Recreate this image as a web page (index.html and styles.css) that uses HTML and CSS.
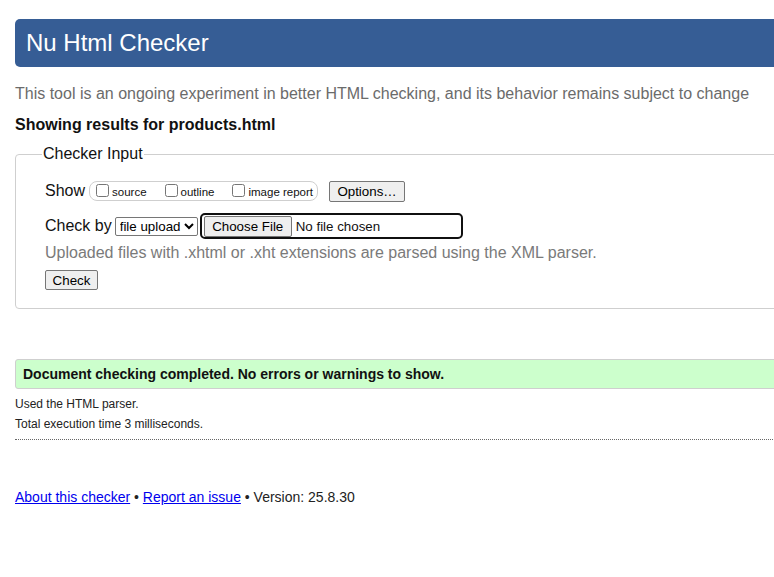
FILE: index.html
```html
<!DOCTYPE html>
<html lang="en">
<head>
<meta charset="utf-8">
<title>Nu Html Checker</title>
<link rel="stylesheet" href="styles.css">
</head>
<body>
<div class="page">
  <h1 class="title">Nu Html Checker</h1>
  <p class="tagline">This tool is an ongoing experiment in better HTML checking, and its behavior remains subject to change</p>
  <p class="showing">Showing results for products.html</p>
  <fieldset class="input-box">
    <legend class="legend">Checker Input</legend>
    <div class="row show-row">
      <span class="row-label">Show</span>
      <span class="show-group">
        <label class="opt"><input type="checkbox" class="cb">source</label>
        <label class="opt"><input type="checkbox" class="cb">outline</label>
        <label class="opt"><input type="checkbox" class="cb">image report</label>
      </span>
      <button type="button" class="btn options-btn">Options…</button>
    </div>
    <div class="row check-row">
      <span class="row-label">Check by</span>
      <select class="select"><option>file upload</option></select>
      <span class="file-box"><button type="button" class="btn file-btn">Choose File</button><span class="file-name">No file chosen</span></span>
    </div>
    <p class="hint">Uploaded files with .xhtml or .xht extensions are parsed using the XML parser.</p>
    <button type="button" class="btn check-btn">Check</button>
  </fieldset>
  <p class="success">Document checking completed. No errors or warnings to show.</p>
  <p class="small">Used the HTML parser.</p>
  <p class="small">Total execution time 3 milliseconds.</p>
  <hr class="dotted">
  <p class="footer"><a href="#">About this checker</a> • <a href="#">Report an issue</a> • Version: 25.8.30</p>
</div>
</body>
</html>
```
FILE: styles.css
```css
html, body {
  margin: 0;
  background: #fff;
  overflow: hidden;
}
body {
  font-family: "Liberation Sans", Arial, sans-serif;
  color: #000;
  padding: 19px 0 0 15px;
}
.page {
  width: 1000px;
}
.title {
  margin: 0;
  height: 48px;
  line-height: 48px;
  background: #365d95;
  color: #fff;
  font-size: 24px;
  font-weight: normal;
  padding-left: 11px;
  border-radius: 5px;
}
.tagline {
  margin: 18px 0 0;
  font-size: 16px;
  line-height: 18px;
  color: #6b6b6b;
}
.showing {
  margin: 13px 0 0;
  font-size: 16px;
  line-height: 18px;
  font-weight: bold;
  color: #111;
}
.input-box {
  margin: 11px 0 0;
  padding: 6px 0 18px 29px;
  border: 1px solid #cfcfcf;
  border-radius: 4px;
  min-width: 0;
}
.legend {
  font-size: 16px;
  padding: 0 1px;
  margin-left: -3px;
  color: #111;
}
.row {
  display: flex;
  align-items: center;
}
.row-label {
  font-size: 16px;
  color: #111;
}
.show-row {
  height: 22px;
  margin-top: 11px;
}
.show-group {
  display: inline-flex;
  align-items: center;
  box-sizing: border-box;
  margin-left: 4px;
  height: 20px;
  width: 229px;
  border: 1px solid #cfcfcf;
  border-radius: 8px;
  padding: 0 4px 0 6px;
  justify-content: space-between;
}
.opt {
  display: inline-flex;
  align-items: flex-end;
  font-size: 11.5px;
  line-height: 13px;
  color: #111;
}
.cb {
  margin: 0 3px 2px 0;
  width: 13px;
  height: 13px;
}
.btn {
  font-family: "Liberation Sans", Arial, sans-serif;
  font-size: 13.333px;
  color: #000;
  background: #efefef;
  border: 1px solid #767676;
  border-radius: 2px;
  padding: 0 7px;
  height: 21px;
  line-height: 17px;
  box-sizing: border-box;
}
.options-btn {
  margin-left: 11px;
  width: 76px;
}
.check-row {
  margin-top: 11px;
  height: 26px;
}
.select {
  margin-left: 3px;
  font-family: "Liberation Sans", Arial, sans-serif;
  font-size: 13.333px;
  box-sizing: border-box;
  height: 19px;
  width: 83px;
  padding: 0;
  border: 1px solid #767676;
  border-radius: 2px;
  background: #fff;
  color: #000;
}
.file-box {
  display: inline-flex;
  align-items: center;
  box-sizing: border-box;
  margin-left: 2px;
  width: 263px;
  height: 26px;
  border: 2px solid #101010;
  border-radius: 5px;
  padding-left: 2px;
}
.file-btn {
  height: 21px;
  width: 88px;
  padding: 0;
}
.file-name {
  font-size: 13.333px;
  margin-left: 4px;
  color: #111;
}
.hint {
  margin: 5px 0 0;
  font-size: 16px;
  line-height: 18px;
  color: #7a7a7a;
}
.check-btn {
  margin-top: 8px;
  width: 53px;
  height: 20px;
  padding: 0;
}
.success {
  margin: 50px 0 0;
  height: 28px;
  line-height: 28px;
  padding-left: 7px;
  background: #ccffcc;
  border: 1px solid #cfcfcf;
  border-radius: 3px;
  font-size: 14px;
  font-weight: bold;
  color: #111;
}
.small {
  margin: 8px 0 0;
  font-size: 12px;
  line-height: 14px;
  color: #222;
}
.small + .small {
  margin-top: 6px;
}
.dotted {
  margin: 8px 0 0;
  border: 0;
  border-top: 1px dotted #666;
  height: 0;
}
.footer {
  margin: 49px 0 0;
  font-size: 14px;
  line-height: 16px;
  color: #222;
}
.footer a {
  color: #00e;
}
```
